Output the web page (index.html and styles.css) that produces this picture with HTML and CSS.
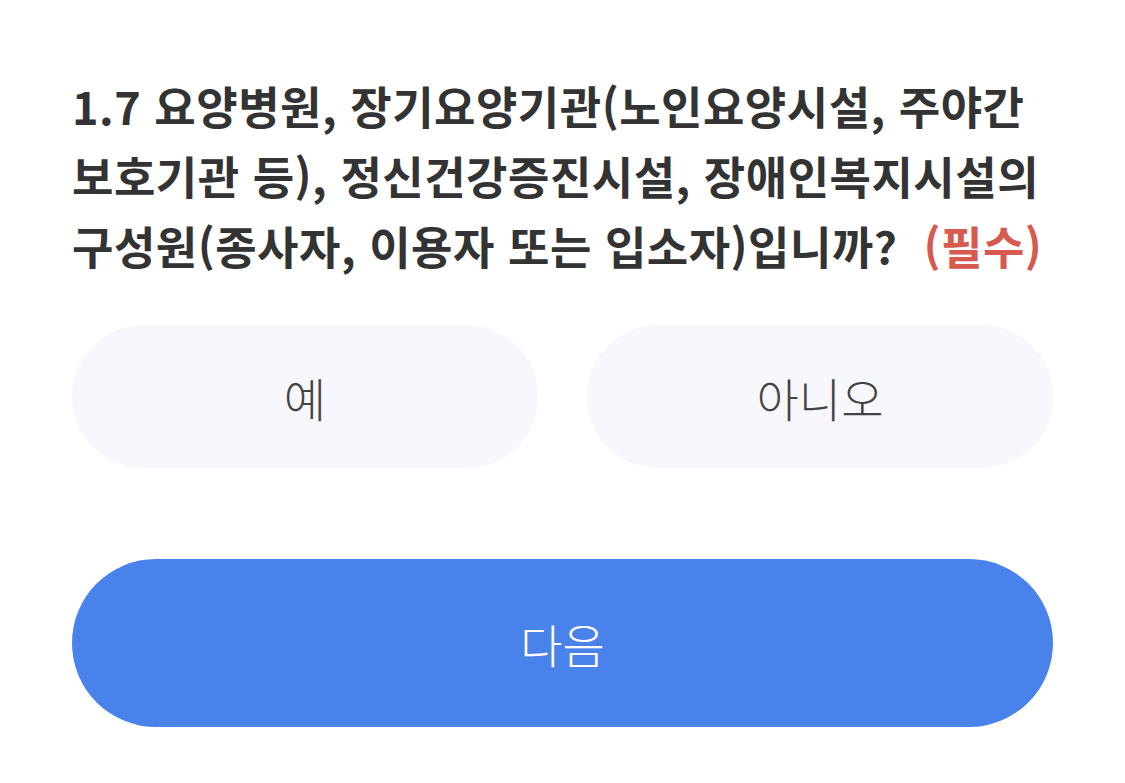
FILE: index.html
```html
<!DOCTYPE html>
<html lang="ko">
<head>
<meta charset="utf-8">
<title>질문</title>
<link rel="stylesheet" href="styles.css">
</head>
<body>
<main class="page">
  <h1 class="question">1.7 요양병원, 장기요양기관(노인요양시설, 주야간 보호기관 등), 정신건강증진시설, 장애인복지시설의 구성원(종사자, 이용자 또는 입소자)입니까?<span class="required">(필수)</span></h1>
  <div class="choices">
    <button class="choice" type="button">예</button>
    <button class="choice" type="button">아니오</button>
  </div>
  <button class="next" type="button">다음</button>
</main>
</body>
</html>
```

FILE: styles.css
```css
html, body {
  margin: 0;
  padding: 0;
  background: #ffffff;
}

body {
  font-family: "Noto Sans CJK KR", "Noto Sans", sans-serif;
  color: #333333;
}

.page {
  width: 981px;
  padding: 71px 72px 0 72px;
  display: flex;
  flex-direction: column;
}

.question {
  margin: 0;
  font-size: 45px;
  font-weight: 700;
  line-height: 70px;
  color: #333333;
  letter-spacing: 0.5px;
}

.required {
  display: inline-block;
  color: #d65a4d;
  margin-left: 26px;
}

.choices {
  display: grid;
  grid-template-columns: 1fr 1fr;
  column-gap: 49px;
  margin-top: 44px;
}

.choice {
  height: 143px;
  border: none;
  border-radius: 72px;
  background: #f7f7fd;
  font-family: "Noto Sans CJK KR", "Noto Sans", sans-serif;
  font-size: 46px;
  font-weight: 300;
  color: #444444;
  padding: 0;
}

.next {
  margin-top: 91px;
  height: 168px;
  border: none;
  border-radius: 84px;
  background: #4a82ec;
  color: #ffffff;
  font-family: "Noto Sans CJK KR", "Noto Sans", sans-serif;
  font-size: 46px;
  font-weight: 300;
  padding: 0;
}
```
